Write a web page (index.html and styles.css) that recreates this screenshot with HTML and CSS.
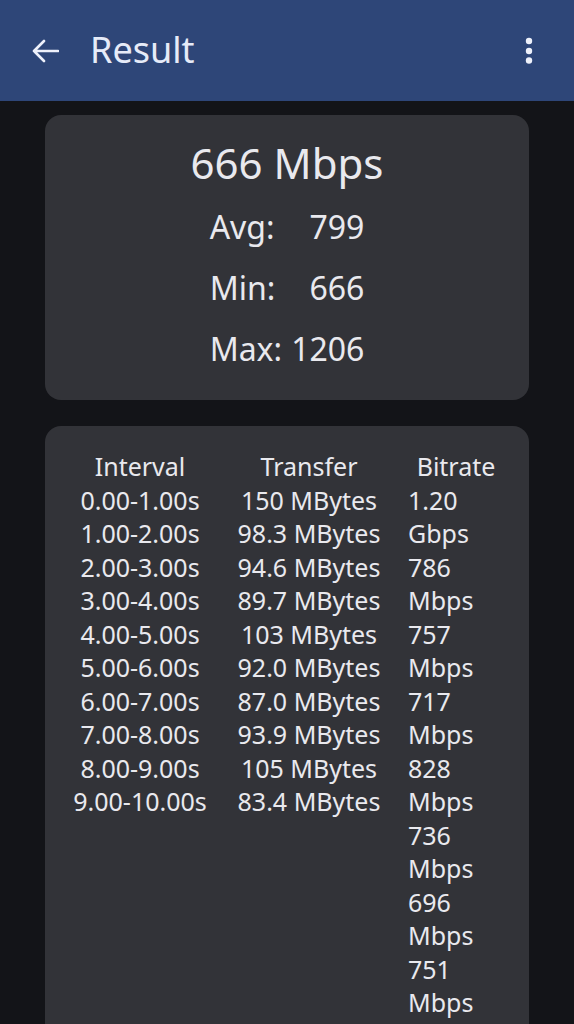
FILE: index.html
```html
<!DOCTYPE html>
<html lang="en">
<head>
  <meta charset="UTF-8" />
  <title>Result</title>
  <meta name="viewport" content="width=device-width, initial-scale=1.0">
  <link rel="stylesheet" href="styles.css">
</head>
<body>
  <header class="appbar">
    <button class="icon-btn back" aria-label="Back">
      <svg width="28" height="24" viewBox="0 0 28 24">
        <path d="M3 12H27M13 2L3 12L13 22" fill="none" stroke="#eef1fb" stroke-width="2.6" stroke-linecap="round" stroke-linejoin="round"/>
      </svg>
    </button>
    <h1 class="title">Result</h1>
    <button class="icon-btn more" aria-label="More options">
      <svg width="8" height="28" viewBox="0 0 8 28">
        <circle cx="4" cy="4" r="3.2" fill="#eef1fb"/>
        <circle cx="4" cy="14" r="3.2" fill="#eef1fb"/>
        <circle cx="4" cy="23.5" r="3.2" fill="#eef1fb"/>
      </svg>
    </button>
  </header>

  <main class="content">
    <section class="card summary">
      <div class="speed">666 Mbps</div>
      <div class="stats">
        <span class="label">Avg:</span><span class="value">799</span>
        <span class="label">Min:</span><span class="value">666</span>
        <span class="label">Max:</span><span class="value">1206</span>
      </div>
    </section>

    <section class="card details">
      <div class="col interval">
        <div class="head">Interval</div>
        <div>0.00-1.00s</div>
        <div>1.00-2.00s</div>
        <div>2.00-3.00s</div>
        <div>3.00-4.00s</div>
        <div>4.00-5.00s</div>
        <div>5.00-6.00s</div>
        <div>6.00-7.00s</div>
        <div>7.00-8.00s</div>
        <div>8.00-9.00s</div>
        <div>9.00-10.00s</div>
      </div>
      <div class="col transfer">
        <div class="head">Transfer</div>
        <div>150 MBytes</div>
        <div>98.3 MBytes</div>
        <div>94.6 MBytes</div>
        <div>89.7 MBytes</div>
        <div>103 MBytes</div>
        <div>92.0 MBytes</div>
        <div>87.0 MBytes</div>
        <div>93.9 MBytes</div>
        <div>105 MBytes</div>
        <div>83.4 MBytes</div>
      </div>
      <div class="col bitrate">
        <div class="head">Bitrate</div>
        <div>1.20 Gbps</div>
        <div>786 Mbps</div>
        <div>757 Mbps</div>
        <div>717 Mbps</div>
        <div>828 Mbps</div>
        <div>736 Mbps</div>
        <div>696 Mbps</div>
        <div>751 Mbps</div>
        <div>881 Mbps</div>
        <div>700 Mbps</div>
      </div>
    </section>
  </main>
</body>
</html>
```

FILE: styles.css
```css
body {
  margin: 0;
  background: #131418;
  color: #e9e9ee;
  font-family: "Noto Sans", "Open Sans", sans-serif;
}
.appbar {
  height: 101px;
  background: #2e4678;
  display: flex;
  align-items: center;
  padding: 0 37px 0 31px;
  box-sizing: border-box;
}
.icon-btn {
  background: none;
  border: 0;
  padding: 0;
  display: flex;
  align-items: center;
  justify-content: center;
}
.back {
  margin-top: 1px;
}
.title {
  flex: 1;
  margin: 0 0 0 31px;
  font-size: 36px;
  font-weight: normal;
  line-height: 36px;
  color: #e6ebf8;
  padding-bottom: 2px;
}
.more {
  width: 16px;
  margin-top: 1px;
}
.content {
  padding: 14px 45px;
  display: flex;
  flex-direction: column;
  gap: 26px;
}
.card {
  background: #323338;
  border-radius: 16px;
}
.summary {
  padding: 24px 0 21px;
  display: flex;
  flex-direction: column;
  align-items: center;
}
.speed {
  font-size: 42px;
  line-height: 48px;
  margin-bottom: 9px;
}
.stats {
  display: grid;
  grid-template-columns: auto auto;
  column-gap: 9px;
  font-size: 32px;
  line-height: 61px;
}
.stats .value {
  text-align: right;
}
.details {
  padding: 24px 25px 40px;
  display: grid;
  grid-template-columns: 140px 146px 96px;
  column-gap: 26px;
  font-size: 25px;
  line-height: 33.5px;
}
.interval, .transfer {
  text-align: center;
}
.bitrate {
  text-align: left;
}
.bitrate .head {
  text-align: center;
}
```
